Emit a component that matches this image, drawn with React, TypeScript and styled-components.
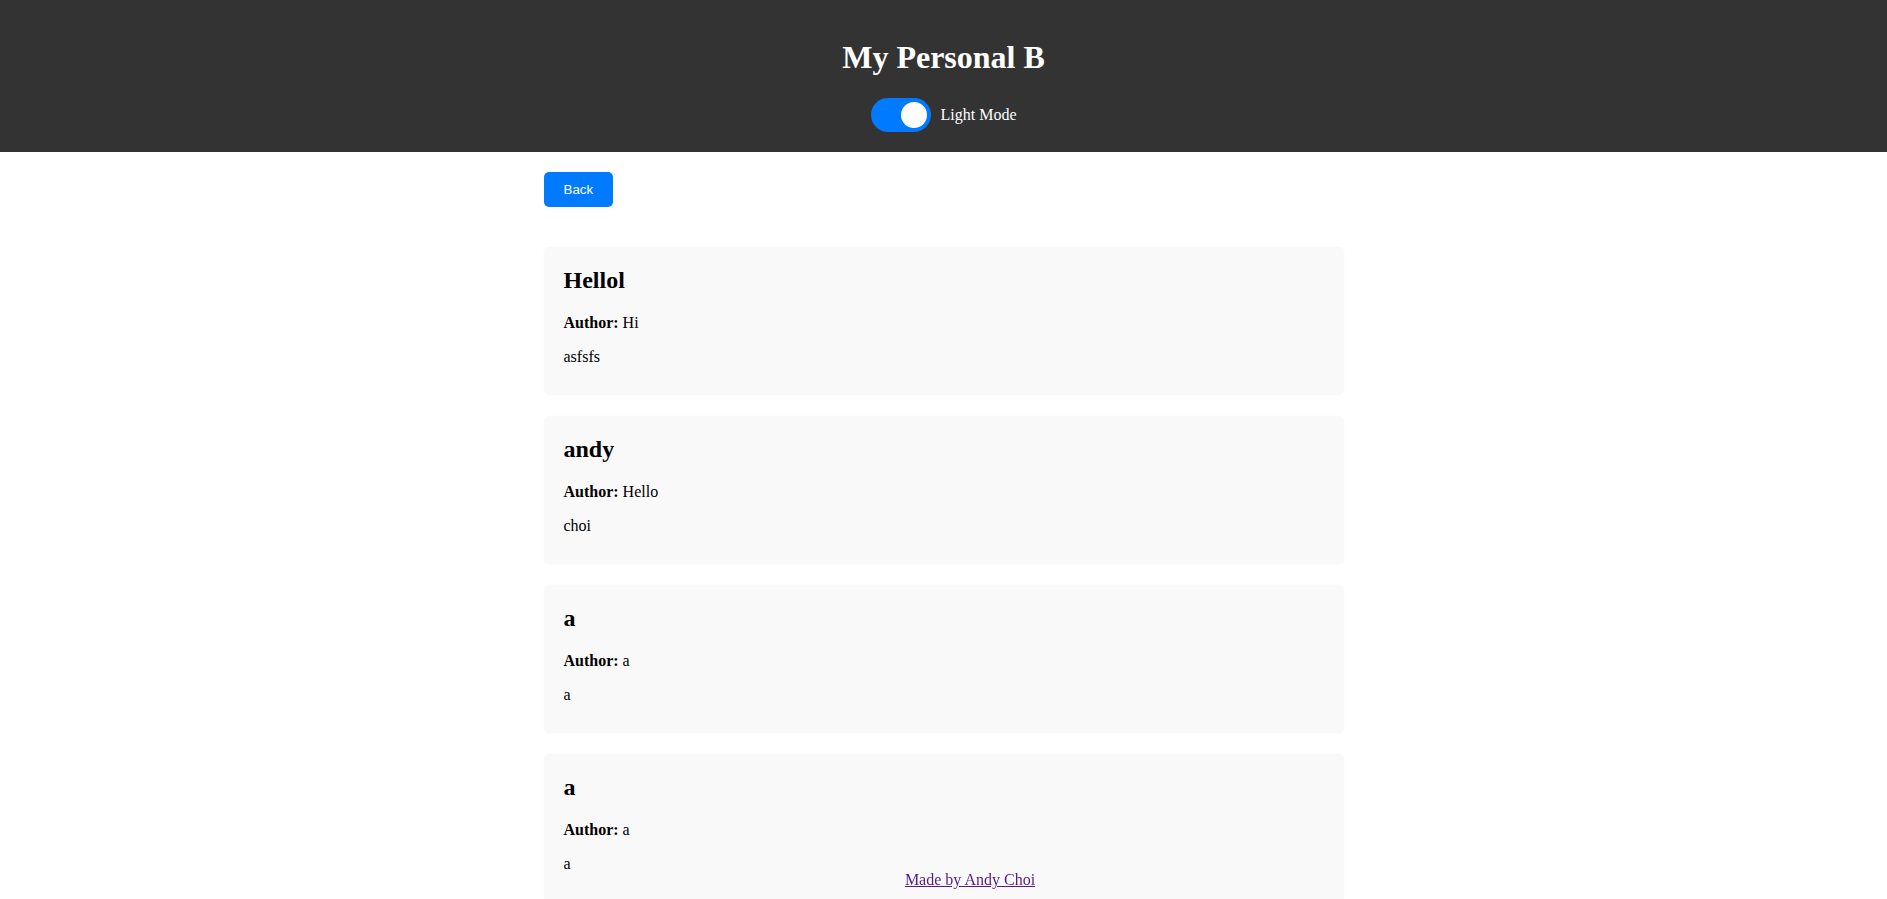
import React, { useState } from 'react';
import styled, { createGlobalStyle } from 'styled-components';

const posts = [
  { id: 1, title: 'Hellol', author: 'Hi', body: 'asfsfs' },
  { id: 2, title: 'andy', author: 'Hello', body: 'choi' },
  { id: 3, title: 'a', author: 'a', body: 'a' },
  { id: 4, title: 'a', author: 'a', body: 'a' },
];

const App = () => {
  const [light, setLight] = useState(true);

  return (
    <>
      <GlobalStyle />
      <Header>
        <Title>My Personal B</Title>
        <ModeRow>
          <Switch>
            <SwitchInput
              type='checkbox'
              checked={light}
              onChange={() => setLight(!light)} />
            <Slider />
          </Switch>
          <ModeLabel>Light Mode</ModeLabel>
        </ModeRow>
      </Header>
      <Main>
        <BackButton>Back</BackButton>
        <PostList>
          {posts.map(post => (
            <PostCard key={post.id}>
              <PostTitle>{post.title}</PostTitle>
              <PostText><strong>Author:</strong> {post.author}</PostText>
              <PostText>{post.body}</PostText>
            </PostCard>
          ))}
        </PostList>
      </Main>
      <Footer>
        <FooterLink href='#'>Made by Andy Choi</FooterLink>
      </Footer>
    </>
  );
};

const GlobalStyle = createGlobalStyle`
  html {
    scrollbar-width: none;
  }
  body {
    margin: 0;
    background: #fff;
    color: #000;
    font-family: "Liberation Serif", "Times New Roman", serif;
    font-size: 16px;
  }
`;

const Header = styled.header`
  background: #333;
  color: #fff;
  text-align: center;
  padding: 18px 20px 20px;
`;

const Title = styled.h1`
  font-size: 32px;
  font-weight: bold;
  margin: 21px 0 22px;
`;

const ModeRow = styled.div`
  display: flex;
  justify-content: center;
  align-items: center;
  gap: 10px;
`;

const Switch = styled.label`
  position: relative;
  display: inline-block;
  width: 60px;
  height: 34px;
`;

const Slider = styled.span`
  position: absolute;
  inset: 0;
  cursor: pointer;
  background: #ccc;
  border-radius: 34px;
  transition: 0.3s;

  &::before {
    content: '';
    position: absolute;
    left: 4px;
    bottom: 4px;
    width: 26px;
    height: 26px;
    border-radius: 50%;
    background: #fff;
    transition: 0.3s;
  }
`;

const SwitchInput = styled.input`
  opacity: 0;
  width: 0;
  height: 0;

  &:checked + ${Slider} {
    background: #007bff;
  }
  &:checked + ${Slider}::before {
    transform: translateX(26px);
  }
`;

const ModeLabel = styled.span`
  font-size: 16px;
`;

const Main = styled.main`
  max-width: 800px;
  margin: 0 auto;
  padding: 20px 0;
`;

const BackButton = styled.button`
  display: block;
  background: #007bff;
  color: #fff;
  border: none;
  border-radius: 5px;
  padding: 10px 20px;
  font-family: "Liberation Sans", Arial, sans-serif;
  font-size: 13.33px;
  cursor: pointer;
  margin-bottom: 40px;
`;

const PostList = styled.section`
  display: flex;
  flex-direction: column;
  gap: 21px;
`;

const PostCard = styled.article`
  background: #f9f9f9;
  border-radius: 5px;
  padding: 20px 20px 13px;
  box-shadow: 0 0 2px rgba(0, 0, 0, 0.03);
`;

const PostTitle = styled.h2`
  font-size: 24px;
  margin: 0 0 20px;
`;

const PostText = styled.p`
  margin: 16px 0;
`;

const Footer = styled.footer`
  position: fixed;
  left: 0;
  right: 0;
  bottom: 0;
  padding: 10px 0 10px 53px;
  text-align: center;
`;

const FooterLink = styled.a`
  color: #551a8b;
  text-decoration: underline;
`;

export default App;
